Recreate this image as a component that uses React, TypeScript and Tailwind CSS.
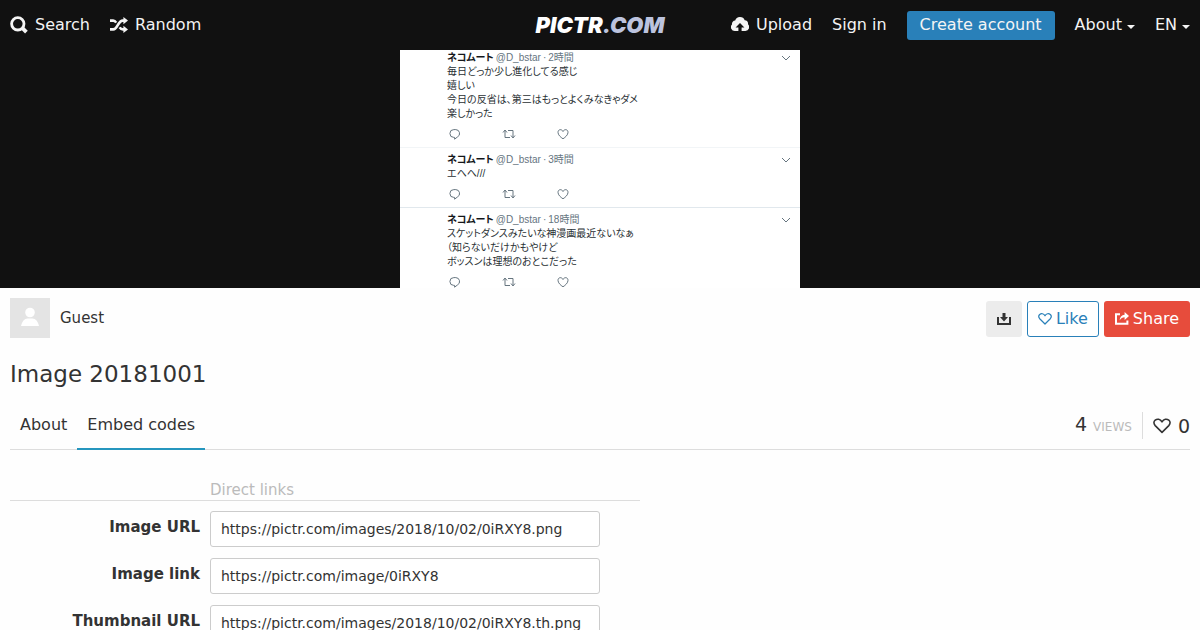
import React from "react";

type IconProps = { className?: string };

const SearchIcon = ({ className }: IconProps) => (
  <svg viewBox="0 0 18 18" className={className} fill="none" stroke="currentColor" aria-hidden="true">
    <circle cx="7.8" cy="7.8" r="6.2" strokeWidth="2.8" />
    <path d="M12.4 12.2l4 4" strokeWidth="3.8" />
  </svg>
);

const ShuffleIcon = ({ className }: IconProps) => (
  <svg viewBox="0 0 18 18" className={className} aria-hidden="true">
    <g fill="none" stroke="currentColor" strokeWidth="2.6">
      <path d="M0 4.600h3.200c1.400 0 2.200.8 3 2" />
      <path d="M0 13.400h3.200c4.600 0 4.600-8.800 9.600-8.800h1.400" />
      <path d="M9.600 11.400c.8 1.200 1.800 2 3.200 2h1.400" />
    </g>
    <path d="M13.400 1l4.600 3.600-4.600 3.600zM13.400 9.800l4.600 3.600-4.600 3.600z" fill="currentColor" />
  </svg>
);

const CloudUploadIcon = ({ className }: IconProps) => (
  <svg viewBox="0 0 18 18" className={className} fill="currentColor" aria-hidden="true">
    <path d="M7.400 15H3.900A3.900 3.900 0 0 1 1 8.400 3.300 3.300 0 0 1 4.200 4.600 5 5 0 0 1 13.700 4.200 3.700 3.700 0 0 1 17 8.300 3.900 3.900 0 0 1 14.400 15h-3.800v-3.400h2.800L9 7 4.600 11.600h2.800z" />
  </svg>
);

const HeartIcon = ({ className }: IconProps) => (
  <svg viewBox="0 0 18 18" className={className} fill="none" stroke="currentColor" strokeWidth="1.600" strokeLinejoin="round" aria-hidden="true">
    <path d="M9 15.400L2.200 8.600C.4 6.600.6 4.400 2.200 3.100 4.200 1.600 7.200 1.800 9 4.800c1.800-3 4.800-3.200 6.800-1.700 1.600 1.300 1.800 3.500 0 5.500z" />
  </svg>
);

const DownloadIcon = ({ className }: IconProps) => (
  <svg viewBox="0 0 14 14" className={className} fill="currentColor" aria-hidden="true">
    <path d="M0 5h2v6h10V5h2v8H0z" />
    <path d="M5.500 1h3v4H11L7 9.400 3 5h2.500z" />
  </svg>
);

const ShareIcon = ({ className }: IconProps) => (
  <svg viewBox="0 0 14 14" className={className} fill="currentColor" aria-hidden="true">
    <path d="M0 1.200h5v2H2v7.600h9.400V8.500h2v4.300H0z" />
    <path d="M9.600 0L14 4 9.600 8V5.300C7.500 5.300 6 6.200 4.600 8.400 4.800 5 6.600 2.900 9.600 2.700z" />
  </svg>
);

const ReplyIcon = () => (
  <svg viewBox="0 0 12 12" className="size-3" fill="none" stroke="currentColor" aria-hidden="true">
    <path d="M5.600 9.400H4.800a3.900 3.900 0 0 1 0-7.800h2a3.900 3.900 0 0 1 1.600 7.400L5.600 11.200z" />
  </svg>
);

const RetweetIcon = () => (
  <svg viewBox="0 0 14 12" className="h-3 w-3.5" fill="none" stroke="currentColor" aria-hidden="true">
    <path d="M1 4.500L3 2l2 2.500M3 2.500v7h5M6 2.500h5v7M9 7.500l2 2.500 2-2.500" />
  </svg>
);

const LikeIcon = () => (
  <svg viewBox="0 0 12 12" className="size-3" fill="none" stroke="currentColor" aria-hidden="true">
    <path d="M6 10.800C3.600 9.200 1 7 1 4.300 1 1.100 4.800.800 6 3.500 7.200.8 11 1.100 11 4.300 11 7 8.400 9.200 6 10.800z" />
  </svg>
);

const Caret = () => (
  <svg viewBox="0 0 8 4" className="mt-1 h-1 w-2" fill="currentColor" aria-hidden="true">
    <path d="M0 0h8L4 4z" />
  </svg>
);

type Tweet = { age: string; lines: string[] };

const tweets: Tweet[] = [
  {
    age: "2時間",
    lines: ["毎日どっか少し進化してる感じ", "嬉しい", "今日の反省は、第三はもっとよくみなきゃダメ", "楽しかった"],
  },
  { age: "3時間", lines: ["エヘヘ///"] },
  {
    age: "18時間",
    lines: ["スケットダンスみたいな神漫画最近ないなぁ", "（知らないだけかもやけど", "ボッスンは理想のおとこだった"],
  },
];

const links = [
  { id: "image-url", label: "Image URL", value: "https://pictr.com/images/2018/10/02/0iRXY8.png" },
  { id: "image-link", label: "Image link", value: "https://pictr.com/image/0iRXY8" },
  { id: "thumbnail-url", label: "Thumbnail URL", value: "https://pictr.com/images/2018/10/02/0iRXY8.th.png" },
];

function TopBar() {
  return (
    <header className="grid h-[50px] shrink-0 grid-cols-[1fr_auto_1fr] items-center bg-[#111] px-2.5 text-[16px] leading-5 text-[#f4f4f4]">
      <nav className="flex items-center gap-5">
        <a href="#search" className="flex items-center gap-[7px]">
          <SearchIcon className="size-[18px]" />
          Search
        </a>
        <a href="#random" className="flex items-center gap-[7px]">
          <ShuffleIcon className="size-[18px]" />
          Random
        </a>
      </nav>
      <a
        href="#home"
        className="font-['Inter',sans-serif] text-[22px] leading-6 font-black text-white italic"
      >
        PICTR<span className="text-[#bcc3de]">.COM</span>
      </a>
      <nav className="flex items-center justify-end gap-5">
        <a href="#upload" className="flex items-center gap-[7px]">
          <CloudUploadIcon className="size-[18px]" />
          Upload
        </a>
        <a href="#signin">Sign in</a>
        <a href="#signup" className="rounded-[3px] bg-[#2980b9] px-[13px] pt-1 pb-[6px] leading-[19px]">
          Create account
        </a>
        <button type="button" className="flex items-center gap-[5px]">
          About
          <Caret />
        </button>
        <button type="button" className="flex items-center gap-[5px]">
          EN
          <Caret />
        </button>
      </nav>
    </header>
  );
}

function Viewer() {
  return (
    <section className="flex justify-center bg-[#111]">
      <div className="w-[400px] bg-white font-['Liberation_Sans','Noto_Sans_CJK_JP',sans-serif] text-[10px] leading-[14px] text-[#292f33]">
        {tweets.map((tweet) => (
          <article
            key={tweet.age}
            className="border-b border-[#e1e8ed] px-[47px] pt-[5px] pb-[7px] first:border-[#f2f5f7] first:pt-px last:border-b-0 last:pb-0"
          >
            <div className="-mr-10 flex items-center justify-between">
              <p className="flex gap-0.5 text-[#66757f]">
                <b className="text-[#14171a] [font-feature-settings:'palt']">ネコムート</b>
                <span>@D_bstar</span>
                <span>·</span>
                <span>{tweet.age}</span>
              </p>
              <svg viewBox="0 0 12 8" className="mr-px h-2 w-3" fill="none" stroke="#66757f" aria-hidden="true">
                <path d="M2 2l4 4 4-4" />
              </svg>
            </div>
            {tweet.lines.map((line) => (
              <p key={line} className="whitespace-nowrap [font-feature-settings:'palt']">
                {line}
              </p>
            ))}
            <div className="mt-[7px] flex gap-[41px] pl-0.5 text-[#66757f]">
              <ReplyIcon />
              <RetweetIcon />
              <LikeIcon />
            </div>
          </article>
        ))}
      </div>
    </section>
  );
}

export default function App() {
  return (
    <div className="flex h-screen flex-col overflow-hidden bg-[#fefefe] font-['DejaVu_Sans',sans-serif] text-[15px] text-[#333]">
      <TopBar />
      <Viewer />
      <main className="px-2.5 pt-2.5">
        <div className="flex items-start justify-between">
          <a href="#guest" className="flex items-center gap-2.5">
            <svg viewBox="0 0 40 40" className="size-10 bg-[#e4e4e4]" fill="#fff" aria-hidden="true">
              <circle cx="20" cy="14.500" r="4.800" />
              <path d="M11 28c1-4.500 3.500-7.500 6.500-7.500h5c3 0 5.500 3 6.500 7.500z" />
            </svg>
            Guest
          </a>
          <div className="flex gap-[5px] pt-[3px] text-[16px]">
            <button
              type="button"
              aria-label="Download"
              className="flex size-9 items-center justify-center rounded-[3px] bg-[#ececec]"
            >
              <DownloadIcon className="size-3.5" />
            </button>
            <button
              type="button"
              className="flex h-9 items-center gap-1 rounded-[3px] border border-[#2980b9] bg-white px-2.5 text-[#2980b9]"
            >
              <HeartIcon className="size-3.5" />
              Like
            </button>
            <button
              type="button"
              className="flex h-9 items-center gap-1 rounded-[3px] bg-[#e74c3c] px-[11px] text-white"
            >
              <ShareIcon className="size-3.5" />
              Share
            </button>
          </div>
        </div>

        <h1 className="mt-5 text-[23px] leading-8">Image 20181001</h1>

        <div className="mt-2.5 flex h-[50px] justify-between border-b border-[#ddd] text-[16px]">
          <nav className="flex">
            <a href="#about" className="flex items-center px-2.5">
              About
            </a>
            <a href="#embeds" className="-mb-px flex items-center border-b-2 border-[#2596be] px-2.5 pt-px">
              Embed codes
            </a>
          </nav>
          <div className="flex items-center pt-0.5 text-[19px] leading-6">
            <p className="border-r border-[#ddd] pr-2.5">
              4 <span className="text-[12px] text-[#bbb]">VIEWS</span>
            </p>
            <p className="flex items-center gap-[7px] pl-2.5">
              <HeartIcon className="size-[18px]" />0
            </p>
          </div>
        </div>

        <section className="mt-[30px] max-w-[630px]">
          <h2 className="mb-2.5 border-b border-[#ddd] pl-[200px] leading-5 text-[#bbb]">Direct links</h2>
          <div className="flex flex-col gap-[11px]">
            {links.map((link) => (
              <div key={link.id} className="flex items-start gap-2.5 pr-10">
                <label htmlFor={link.id} className="w-[190px] text-right leading-8 font-bold">
                  {link.label}
                </label>
                <input
                  id={link.id}
                  type="text"
                  readOnly
                  defaultValue={link.value}
                  className="h-9 min-w-0 flex-1 rounded-[3px] border border-[#ccc] bg-white px-2.5 text-[14px]"
                />
              </div>
            ))}
          </div>
        </section>
      </main>
    </div>
  );
}
